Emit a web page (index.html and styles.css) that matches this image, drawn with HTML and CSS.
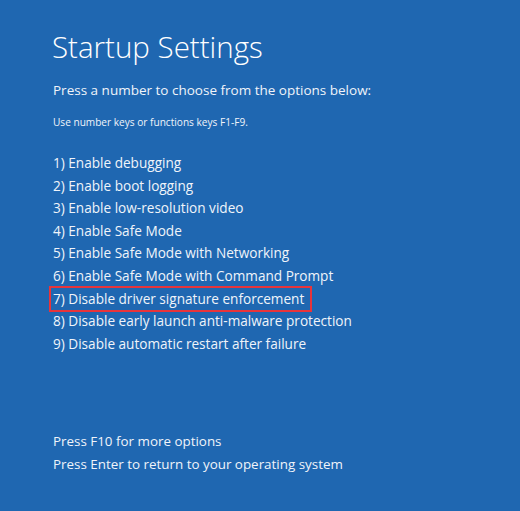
FILE: index.html
```html
<!DOCTYPE html>
<html>
<head>
<meta charset="utf-8">
<link rel="stylesheet" href="styles.css">
</head>
<body>
<main class="screen">
  <h1 class="title">Startup Settings</h1>
  <p class="lead">Press a number to choose from the options below:</p>
  <p class="hint">Use number keys or functions keys F1-F9.</p>
  <ul class="options">
    <li>1) Enable debugging</li>
    <li>2) Enable boot logging</li>
    <li>3) Enable low-resolution video</li>
    <li>4) Enable Safe Mode</li>
    <li>5) Enable Safe Mode with Networking</li>
    <li>6) Enable Safe Mode with Command Prompt</li>
    <li class="marked">7) Disable driver signature enforcement</li>
    <li>8) Disable early launch anti-malware protection</li>
    <li>9) Disable automatic restart after failure</li>
  </ul>
  <div class="footer">
    <p>Press F10 for more options</p>
    <p>Press Enter to return to your operating system</p>
  </div>
</main>
</body>
</html>
```
FILE: styles.css
```css
html, body {
  margin: 0;
  padding: 0;
  background: #1f67b1;
}
.screen {
  width: 520px;
  height: 511px;
  box-sizing: border-box;
  padding: 27px 0 0 52px;
  color: #ffffff;
  font-family: "Open Sans", "Noto Sans", sans-serif;
  display: flex;
  flex-direction: column;
  align-items: flex-start;
}
.title {
  margin: 0;
  font-size: 29.5px;
  font-weight: 300;
  line-height: 40px;
}
.lead {
  margin: 13px 0 0 1px;
  font-size: 13.5px;
  line-height: 20px;
  color: #f0f4fa;
}
.hint {
  margin: 15px 0 0 1px;
  font-size: 10.1px;
  line-height: 14px;
  color: #f0f4fa;
}
.options {
  list-style: none;
  margin: 23px 0 0 0;
  padding: 0;
}
.options li {
  font-size: 13.6px;
  line-height: 22.6px;
  padding-left: 1px;
  color: #f0f4fa;
  white-space: nowrap;
}
.options li.marked {
  width: fit-content;
  margin: -2px 0 -2px -3px;
  padding: 1px 6px 1px 2px;
  line-height: 20.6px;
  border: 2px solid #e8343a;
}
.footer {
  margin-top: 75px;
}
.footer p {
  margin: 0 0 0 1px;
  font-size: 13.4px;
  line-height: 22.8px;
  color: #f0f4fa;
  white-space: nowrap;
}
```
